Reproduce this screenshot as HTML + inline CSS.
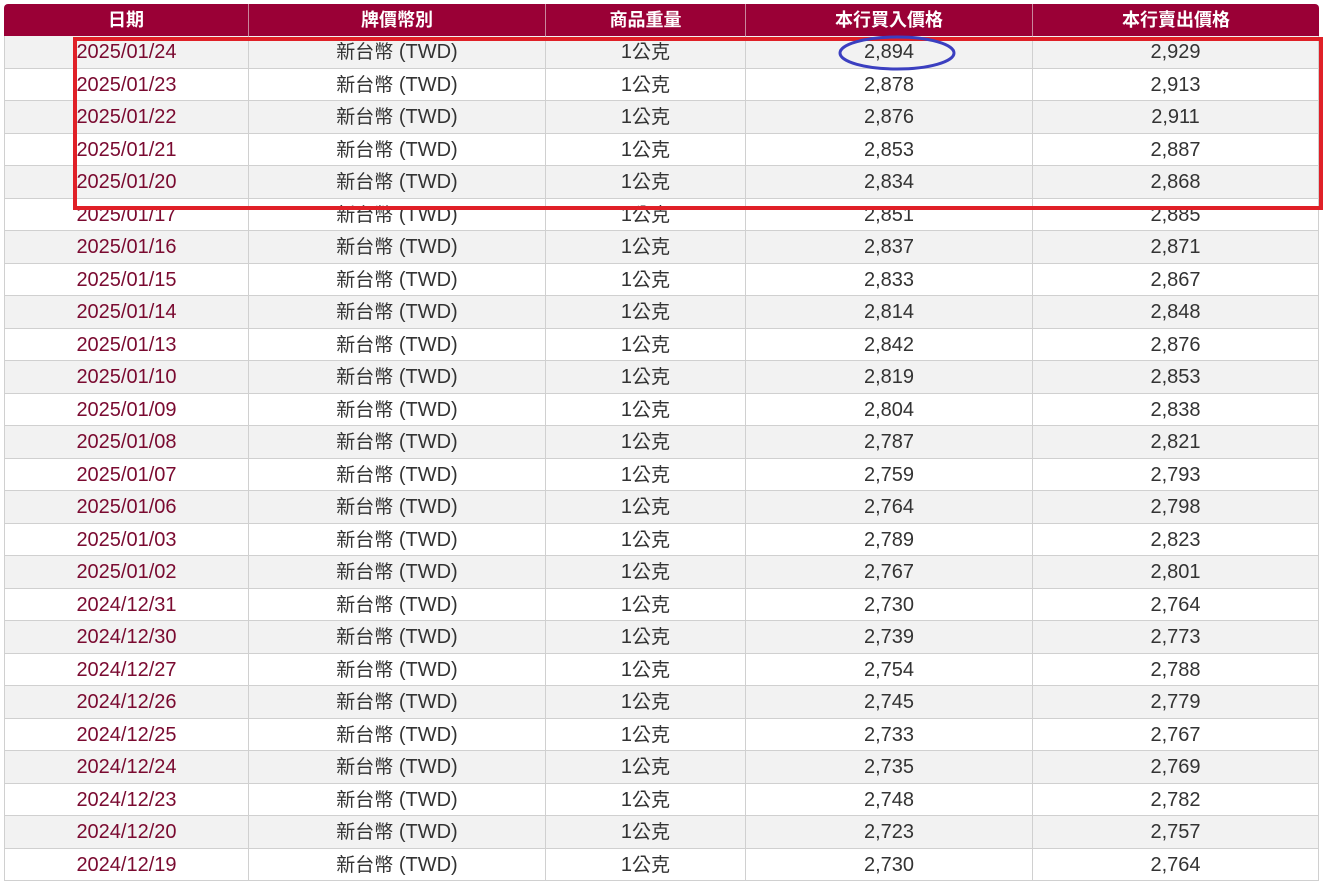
<!DOCTYPE html>
<html><head><meta charset="utf-8"><style>
body{margin:0;width:1340px;height:864px;overflow:hidden;background:#fff;font-family:"Liberation Sans","Noto Sans CJK TC",sans-serif;position:relative}
.hdr{position:absolute;left:4px;top:4px;width:1315px;height:32px;background:#9a0036;border-radius:4px 4px 0 0}
.r{position:absolute;left:4px;width:1315px;height:32.5px;box-sizing:border-box;border-bottom:1px solid #d0d0d0}
.c{position:absolute;top:0;height:100%;text-align:center;line-height:32px;font-size:20px;color:#333;box-sizing:border-box;border-left:1px solid #d0d0d0;white-space:nowrap}
.c span{display:inline-block;vertical-align:top;line-height:32px;height:32px}
.hdr .c{color:#fff;font-weight:bold;font-size:18px;border-left:1px solid #c9869c}
.c1{left:0;width:244px;border-left:1px solid #d0d0d0}
.hdr .c1{border-left:none}
.c2{left:244px;width:297px}.c3{left:541px;width:200px}.c4{left:741px;width:287px}.c5{left:1028px;width:287px;border-right:1px solid #d0d0d0}
.hdr .c5{border-right:none}
.d{color:#7a0a30}
.cj{font-family:"Noto Sans CJK TC",sans-serif;font-size:19px;position:relative;top:-1px}
</style></head><body>
<div class="hdr"><div class="c c1">日期</div><div class="c c2">牌價幣別</div><div class="c c3">商品重量</div><div class="c c4">本行買入價格</div><div class="c c5">本行賣出價格</div></div>
<div id="rows"></div>
<script>
var d=[["2025/01/24","2,894","2,929"],["2025/01/23","2,878","2,913"],["2025/01/22","2,876","2,911"],["2025/01/21","2,853","2,887"],["2025/01/20","2,834","2,868"],["2025/01/17","2,851","2,885"],["2025/01/16","2,837","2,871"],["2025/01/15","2,833","2,867"],["2025/01/14","2,814","2,848"],["2025/01/13","2,842","2,876"],["2025/01/10","2,819","2,853"],["2025/01/09","2,804","2,838"],["2025/01/08","2,787","2,821"],["2025/01/07","2,759","2,793"],["2025/01/06","2,764","2,798"],["2025/01/03","2,789","2,823"],["2025/01/02","2,767","2,801"],["2024/12/31","2,730","2,764"],["2024/12/30","2,739","2,773"],["2024/12/27","2,754","2,788"],["2024/12/26","2,745","2,779"],["2024/12/25","2,733","2,767"],["2024/12/24","2,735","2,769"],["2024/12/23","2,748","2,782"],["2024/12/20","2,723","2,757"],["2024/12/19","2,730","2,764"]];
var h="";d.forEach(function(x,i){h+='<div class="r" style="top:'+(36+i*32.5)+'px;background:'+(i%2?'#fff':'#f2f2f2')+'"><div class="c c1 d"><span>'+x[0]+'</span></div><div class="c c2"><span class="cj">新台幣</span><span>&nbsp;(TWD)</span></div><div class="c c3"><span>1</span><span class="cj">公克</span></div><div class="c c4"><span>'+x[1]+'</span></div><div class="c c5"><span>'+x[2]+'</span></div></div>';});
document.getElementById("rows").innerHTML=h;
</script>
<div style="position:absolute;left:73px;top:37px;width:1250px;height:173px;box-sizing:border-box;border:4px solid #e02027"></div>
<svg style="position:absolute;left:0;top:0" width="1340" height="864"><ellipse cx="897" cy="53" rx="57" ry="16" fill="none" stroke="#3b3fc0" stroke-width="3"/></svg>
</body></html>
